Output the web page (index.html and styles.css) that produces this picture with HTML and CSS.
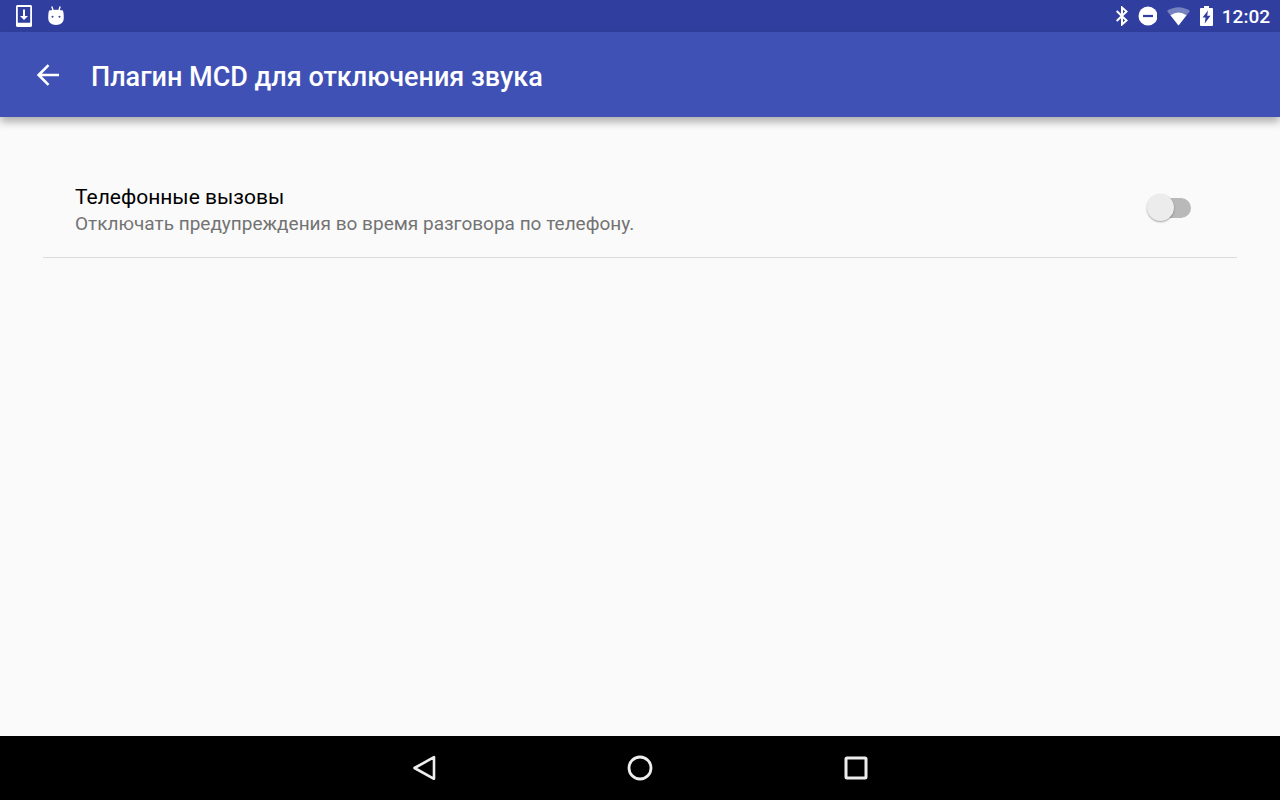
FILE: index.html
```html
<!DOCTYPE html>
<html lang="ru">
<head>
<meta charset="utf-8">
<meta name="viewport" content="width=device-width, initial-scale=1">
<title>Плагин MCD для отключения звука</title>
<link rel="stylesheet" href="styles.css">
</head>
<body>
<div class="status-bar">
  <div class="notifications">
    <svg width="16" height="22" viewBox="0 0 16 22" aria-hidden="true"><path fill="#fff" fill-rule="evenodd" d="M1 0h14L16 1v20L15 22H1L0 21V1zM1.800 2v15.800h12.400V2z"/><path fill="#fff" d="M7 4.500h2V11h3l-4 4-4-4h3z"/></svg>
    <svg width="16" height="20" viewBox="0 0 16 20" aria-hidden="true"><path d="M4 1l1.200 4M12 1l-1.200 4" stroke="#fff" stroke-width="1.400" stroke-linecap="round"/><path fill="#fff" fill-rule="evenodd" d="M1 4.500Q8 3 15 4.500Q16 8 15.800 12.500Q15.500 19 8 19Q.5 19 .2 12.500Q0 8 1 4.500zM4.500 9.800a1 1 0 1 0 0 2 1 1 0 0 0 0-2zM11.500 9.800a1 1 0 1 0 0 2 1 1 0 0 0 0-2z"/></svg>
  </div>
  <div class="indicators">
    <svg width="14" height="20" viewBox="0 0 14 20" aria-hidden="true"><path d="M2.700 5L12.500 14.500 8 18.500V1.500L12.500 5.500 2.700 15" fill="none" stroke="#fff" stroke-width="2"/></svg>
    <svg width="20" height="20" viewBox="0 0 20 20" aria-hidden="true"><circle cx="11" cy="10" r="9.500" fill="#fff"/><path d="M6 10h10" stroke="#303f9f" stroke-width="2.200"/></svg>
    <svg width="24" height="20" viewBox="0 0 24 20" aria-hidden="true"><path fill="#7782c1" d="M1 5Q12.500-2.500 24 5L12.500 19.500z"/><path fill="#fff" d="M4.500 9.300Q12.500 3.700 20.500 9.300L12.500 19.500z"/></svg>
    <svg width="14" height="20" viewBox="0 0 14 20" aria-hidden="true"><path fill="#fff" fill-rule="evenodd" d="M5 0h5v2H13q1 0 1 1v16q0 1-1 1H2q-1 0-1-1V3q0-1 1-1h3zM9 4.500L3.500 11.500h3l-.8 6L11.500 9.800H8.200z"/></svg>
    <time class="clock">12:02</time>
  </div>
</div>
<header class="app-bar">
  <button class="back" type="button" aria-label="Назад"><svg width="22" height="22" viewBox="0 0 22 22" aria-hidden="true"><path d="M22 11H2M11.500 1.200L1.700 11l9.800 9.800" fill="none" stroke="#fff" stroke-width="2.600"/></svg></button>
  <h1 class="title">Плагин MCD для отключения звука</h1>
</header>
<main class="settings">
  <div class="setting">
    <label class="setting-text" for="calls">
      <span class="setting-name">Телефонные вызовы</span>
      <span class="setting-note">Отключать предупреждения во время разговора по телефону.</span>
    </label>
    <input class="switch" id="calls" type="checkbox" role="switch">
  </div>
</main>
<nav class="nav-bar">
  <button type="button" aria-label="Назад"><svg width="28" height="28" viewBox="0 0 28 28" aria-hidden="true"><path d="M4.500 14L24 3.200v21.600z" fill="none" stroke="#eee" stroke-width="2.600" stroke-linejoin="round"/></svg></button>
  <button type="button" aria-label="Главный экран"><svg width="28" height="28" viewBox="0 0 28 28" aria-hidden="true"><circle cx="14" cy="14" r="11" fill="none" stroke="#eee" stroke-width="2.800"/></svg></button>
  <button type="button" aria-label="Обзор"><svg width="28" height="28" viewBox="0 0 28 28" aria-hidden="true"><rect x="4" y="4" width="20" height="20" rx="1" fill="none" stroke="#eee" stroke-width="3"/></svg></button>
</nav>
</body>
</html>
```
FILE: styles.css
```css
* { box-sizing: border-box; }

body {
  margin: 0;
  min-height: 100vh;
  display: flex;
  flex-direction: column;
  background: #fafafa;
  color: #000;
  font-family: Roboto, "Noto Sans", sans-serif;
}

button {
  display: flex;
  align-items: center;
  justify-content: center;
  padding: 0;
  border: 0;
  background: none;
  cursor: pointer;
}

.status-bar {
  height: 32px;
  padding: 0 10px 0 16px;
  display: flex;
  align-items: center;
  justify-content: space-between;
  background: #303f9f;
  color: #fff;
}

.notifications {
  display: flex;
  align-items: center;
  gap: 16px;
}

.indicators {
  display: flex;
  align-items: center;
  gap: 9px;
}

.clock {
  padding-top: 2px;
  font-size: 19px;
  font-weight: 500;
  line-height: 30px;
}

.app-bar {
  height: 85px;
  padding: 0 32px;
  display: flex;
  align-items: center;
  gap: 27px;
  background: #3f51b5;
  color: #fff;
  box-shadow: 0 5px 8px rgba(0, 0, 0, 0.3);
}

.back {
  width: 32px;
  height: 32px;
}

.title {
  margin: 0;
  padding-top: 4px;
  font-size: 27px;
  font-weight: 500;
  line-height: 32px;
}

.settings {
  flex: 1;
  padding: 42px 43px;
}

.setting {
  padding: 24px 46px 22px 32px;
  display: flex;
  align-items: flex-start;
  justify-content: space-between;
  border-bottom: 1px solid #dadada;
}

.setting-text {
  display: flex;
  flex-direction: column;
}

.setting-name {
  font-size: 21px;
  line-height: 28px;
}

.setting-note {
  padding-top: 1px;
  color: #737373;
  font-size: 19px;
  line-height: 23px;
}

.switch {
  appearance: none;
  flex: none;
  position: relative;
  width: 36px;
  height: 20px;
  margin: 15px 0 0;
  border-radius: 10px;
  background: #b9b9b9;
  cursor: pointer;
}

.switch::before {
  content: "";
  position: absolute;
  top: -4px;
  left: -8px;
  width: 27px;
  height: 27px;
  border-radius: 50%;
  background: #ececec;
  box-shadow: 0 1px 2px rgba(0, 0, 0, 0.35);
}

.switch:checked::before {
  left: 17px;
  background: #3f51b5;
}

.nav-bar {
  height: 64px;
  display: flex;
  align-items: center;
  justify-content: center;
  gap: 152px;
  background: #000;
}

.nav-bar button {
  width: 64px;
  height: 64px;
}
```
